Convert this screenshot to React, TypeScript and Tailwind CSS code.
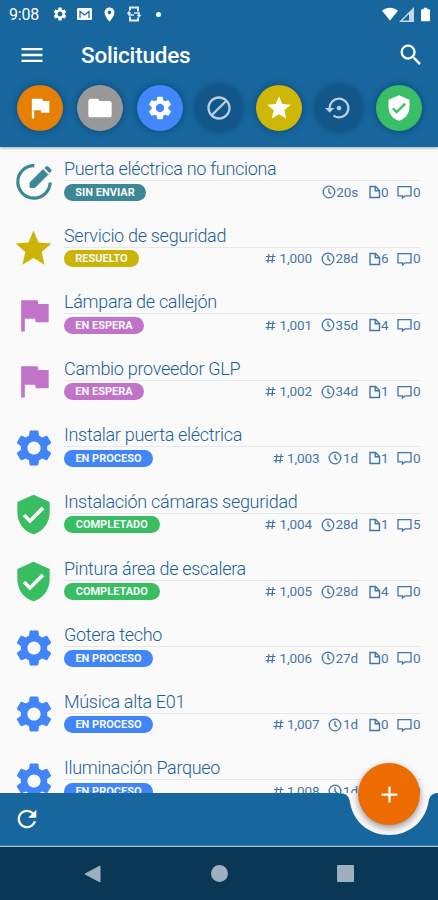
import type { ReactNode } from 'react'
import {
	MdAdd,
	MdBlock,
	MdFlag,
	MdFolder,
	MdLocationOn,
	MdMenu,
	MdRefresh,
	MdSearch,
	MdSettings,
	MdSettingsBackupRestore,
	MdStar,
	MdVerifiedUser,
} from 'react-icons/md'

type Status = 'unsent' | 'solved' | 'waiting' | 'process' | 'done'

interface Ticket {
	title: string
	status: Status
	number?: string
	age: string
	files: number
	comments: number
}

const tickets: Ticket[] = [
	{ title: 'Puerta eléctrica no funciona', status: 'unsent', age: '20s', files: 0, comments: 0 },
	{ title: 'Servicio de seguridad', status: 'solved', number: '1,000', age: '28d', files: 6, comments: 0 },
	{ title: 'Lámpara de callejón', status: 'waiting', number: '1,001', age: '35d', files: 4, comments: 0 },
	{ title: 'Cambio proveedor GLP', status: 'waiting', number: '1,002', age: '34d', files: 1, comments: 0 },
	{ title: 'Instalar puerta eléctrica', status: 'process', number: '1,003', age: '1d', files: 1, comments: 0 },
	{ title: 'Instalación cámaras seguridad', status: 'done', number: '1,004', age: '28d', files: 1, comments: 5 },
	{ title: 'Pintura área de escalera', status: 'done', number: '1,005', age: '28d', files: 4, comments: 0 },
	{ title: 'Gotera techo', status: 'process', number: '1,006', age: '27d', files: 0, comments: 0 },
	{ title: 'Música alta E01', status: 'process', number: '1,007', age: '1d', files: 0, comments: 0 },
	{ title: 'Iluminación Parqueo', status: 'process', number: '1,008', age: '1d', files: 0, comments: 0 },
]

function DraftIcon() {
	return (
		<svg viewBox="0 0 44 44" className="w-11 h-11" fill="none">
			<path d="M22.3 5.7A16.2 16.2 0 1 0 38.2 22.5" stroke="currentColor" strokeWidth="3.2" />
			<path d="M18 27.5v-5L31 9.500l5 5-13 13z" fill="currentColor" stroke="currentColor" strokeWidth=".8" strokeLinejoin="round" />
			<path d="m32.400 8.100 1.600-1.600c.7-.7 1.500-.7 2.200 0l2.800 2.800c.7.7.7 1.500 0 2.200l-1.600 1.600z" fill="currentColor" />
		</svg>
	)
}

const statuses: Record<Status, { label: string; text: string; bg: string; icon: ReactNode }> = {
	unsent: { label: 'SIN ENVIAR', text: 'text-[#3c8794]', bg: 'bg-[#3c8794] w-[82px]', icon: <DraftIcon /> },
	solved: { label: 'RESUELTO', text: 'text-[#ccb404]', bg: 'bg-[#ccb404] w-[75px]', icon: <MdStar className="w-[43px] h-[43px]" /> },
	waiting: { label: 'EN ESPERA', text: 'text-[#c173c9]', bg: 'bg-[#c173c9] w-[80px]', icon: <MdFlag className="w-11 h-11" /> },
	process: { label: 'EN PROCESO', text: 'text-[#4285f8]', bg: 'bg-[#4285f8] w-[89px]', icon: <MdSettings className="w-11 h-11" /> },
	done: { label: 'COMPLETADO', text: 'text-[#39bd62]', bg: 'bg-[#39bd62] w-[95.5px]', icon: <MdVerifiedUser className="w-[43px] h-[43px]" /> },
}

const filters = [
	{ icon: MdFlag, style: 'bg-[#e58003] text-white' },
	{ icon: MdFolder, style: 'bg-[#999999] text-white' },
	{ icon: MdSettings, style: 'bg-[#4388fb] text-white' },
	{ icon: MdBlock, style: 'bg-[#13568a] text-[#b9d0e4]' },
	{ icon: MdStar, style: 'bg-[#ceb706] text-white' },
	{ icon: MdSettingsBackupRestore, style: 'bg-[#13568a] text-[#b9d0e4]' },
	{ icon: MdVerifiedUser, style: 'bg-[#3bbf66] text-white' },
]

function StatusBar() {
	return (
		<div className="flex items-center h-7 pl-[9px] pr-2 text-white">
			<span className="w-[31px] text-[16px] tracking-[-0.2px] pt-px">9:08</span>
			<MdSettings className="ml-3 w-4 h-4" />
			<svg viewBox="0 0 15 12" className="ml-[9px] w-[15px] h-3">
				<rect width="15" height="12" rx="1.2" fill="white" />
				<path d="M3 10V3.500L7.500 7 12 3.500V10" fill="none" stroke="#17669d" strokeWidth="1.2" />
			</svg>
			<MdLocationOn className="ml-[9px] w-[17px] h-[17px]" />
			<svg viewBox="0 0 16 18" className="ml-2 w-4 h-[18px]" fill="none" stroke="#e3edf6">
				<path d="M4 5.500V2.500h8v4M4 11.500v4h8v-3" strokeWidth="2" />
				<path d="M3 7.500V10h5M13 11V8H8" strokeWidth="1.500" />
				<path d="M1 8.500 3 6l2 2.500zM11 10h4l-2 2.500z" fill="#e3edf6" strokeWidth=".5" />
			</svg>
			<span className="ml-[14px] w-[5px] h-[5px] rounded-full bg-white" />
			<svg viewBox="0 0 17 14" className="ml-auto w-4 h-[14px]">
				<path d="M0 3.600C5-.8 12-.8 17 3.600L8.500 14z" fill="white" />
			</svg>
			<svg viewBox="0 0 15 15" className="ml-[1px] w-[15px] h-[15px]">
				<path d="M0 15 15 0v15z" fill="#c3d9e8" />
				<path d="M3.500 13.500 10 7v6.500z" fill="#17669d" />
			</svg>
			<svg viewBox="0 0 10 15" className="ml-[7px] w-[9px] h-[15px]">
				<path d="M3 0h4v1.600h2c.6 0 1 .4 1 1V14c0 .6-.4 1-1 1H1c-.6 0-1-.4-1-1V2.600c0-.6.4-1 1-1h2z" fill="white" />
			</svg>
		</div>
	)
}

function TicketRow({ ticket }: { ticket: Ticket }) {
	const status = statuses[ticket.status]
	return (
		<li className="flex h-[66.6px] shrink-0 pl-[11.5px] pr-[17px]">
			<div className={`w-11 h-[67px] flex items-center justify-center ${status.text}`}>{status.icon}</div>
			<div className="flex-1 ml-[8.5px] pt-2 text-[#1d5f98]">
				<div className="h-[25px] leading-[25px] text-[18px] font-light tracking-[-0.3px] whitespace-nowrap border-b border-[#e6e9ec]">
					{ticket.title}
				</div>
				<div className="flex items-center h-[22px]">
					<span className={`h-[17px] rounded-full text-center text-[11px] leading-[17.5px] font-bold text-[#f5fafc] ${status.bg}`}>
						{status.label}
					</span>
					<div className="ml-auto flex items-center text-[13.5px] leading-[19px] tracking-[-0.1px] text-[#4475aa]">
						{ticket.number && (
							<>
								<svg viewBox="0 0 11 11" className="w-[11px] h-[11px] mr-[3px]" fill="none" stroke="currentColor" strokeWidth="1.2">
									<path d="M4 .8 2.8 10.2M8.2.8 7 10.2M1 3.5h9.5M.5 7.5H10" />
								</svg>
								<span className="mr-[9px]">{ticket.number}</span>
							</>
						)}
						<svg viewBox="0 0 14 14" className="w-[14px] h-[14px] mr-[0.5px]" fill="none" stroke="currentColor" strokeWidth="1.3">
							<circle cx="7" cy="7" r="5.8" />
							<path d="M7 3.2v4.1l2.4 1.8" />
						</svg>
						<span>{ticket.age}</span>
						<svg viewBox="0 0 12 14" className="w-3 h-[14px] ml-[11px]" fill="none" stroke="currentColor" strokeWidth="1.4">
							<path d="M1 1.5h5.5l4 4v7H1z" />
							<path d="M6.2 1.5v4.2h4.3" />
						</svg>
						<span className="w-2">{ticket.files}</span>
						<svg viewBox="0 0 15 14" className="w-[15px] h-[14px] mr-[1px] ml-[8px]" fill="none" stroke="currentColor" strokeWidth="1.3">
							<path d="M1 1.7h13v9.1H8.2L5.5 13v-2.2H1z" />
						</svg>
						<span className="w-2">{ticket.comments}</span>
					</div>
				</div>
			</div>
		</li>
	)
}

export default function App() {
	return (
		<div className="relative w-[438px] h-[900px] overflow-hidden flex flex-col bg-[#fafafa] font-['Roboto',sans-serif]">
			{/* Header */}
			<header className="relative z-10 h-[147px] shrink-0 bg-[#17669d] shadow-[0_1px_3px_rgba(0,0,0,0.35)]">
				<StatusBar />
				<div className="flex items-center h-[54px] pl-[18px] pr-[13px] text-white">
					<MdMenu className="w-7 h-7" />
					<h1 className="ml-[35px] text-[22.5px] font-medium tracking-[-0.2px] pt-px">Solicitudes</h1>
					<MdSearch className="ml-auto w-7 h-7" />
				</div>
				<div className="flex justify-between pl-[17px] pr-4 pt-[3px]">
					{filters.map(({ icon: Icon, style }, idx) => (
						<button
							key={idx}
							className={`w-[46px] h-[46px] rounded-full flex items-center justify-center shadow-[0_0_5px_2px_rgba(15,73,120,0.65)] ${style}`}
						>
							<Icon className="w-7 h-7" />
						</button>
					))}
				</div>
			</header>

			{/* Tickets */}
			<ul className="flex-1 min-h-0 overflow-hidden flex flex-col pt-px -mb-px">
				{tickets.map((ticket) => (
					<TicketRow key={ticket.title} ticket={ticket} />
				))}
			</ul>

			{/* Bottom bar with the notch around the add button */}
			<footer className="relative h-[55px] shrink-0 flex items-center pl-[13px] text-white">
				<svg viewBox="0 0 438 55" className="absolute inset-0 w-[438px] h-[55px]">
					<path
						d="M0 1H338C346 1 349 4 350 10C353 30 369 43 389 43S425 30 428.500 10C429.500 4 432 1 440 1V54H0Z"
						fill="#17669d"
					/>
					<path d="M0 54.500H438" stroke="#a9c3d8" strokeWidth="1.500" />
				</svg>
				<MdRefresh className="relative -mt-[2px] w-7 h-7" />
				<button className="absolute left-[358px] -top-[29px] w-[62px] h-[62px] rounded-full bg-[#ed6c02] flex items-center justify-center shadow-[0_3px_7px_rgba(0,0,0,0.4)]">
					<MdAdd className="w-[27px] h-[27px]" />
				</button>
			</footer>

			{/* System navigation */}
			<nav className="h-[53px] shrink-0 bg-[#0a3754] pl-[84px] pr-[84px] flex items-center justify-between">
				<svg viewBox="0 0 17 18" className="w-[17px] h-[18px]">
					<path d="M1 9 16 1v16z" fill="#9db0bf" stroke="#9db0bf" strokeLinejoin="round" />
				</svg>
				<span className="w-[17px] h-[17px] rounded-full bg-[#9db0bf]" />
				<span className="w-[17px] h-[17px] rounded-[1px] bg-[#9db0bf]" />
			</nav>
		</div>
	)
}
